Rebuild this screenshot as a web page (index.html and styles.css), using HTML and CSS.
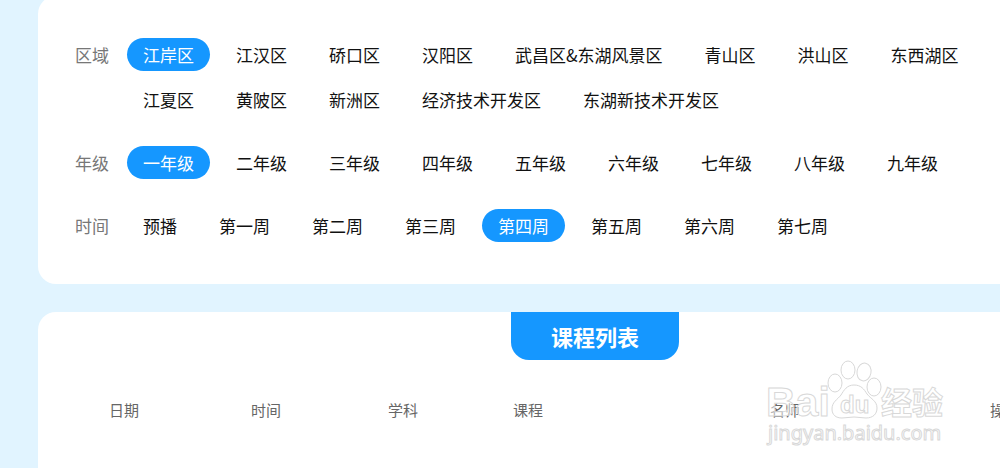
FILE: index.html
```html
<!DOCTYPE html>
<html lang="zh-CN">
<head>
<meta charset="utf-8">
<title>课程列表</title>
<link rel="stylesheet" href="styles.css">
</head>
<body>
    <main class="page">
        <section class="card filters">
            <div class="row" role="group" aria-labelledby="area">
                <span class="label" id="area">区域</span>
                <div class="options">
                    <button type="button" class="option active">江岸区</button>
                    <button type="button" class="option">江汉区</button>
                    <button type="button" class="option">硚口区</button>
                    <button type="button" class="option">汉阳区</button>
                    <button type="button" class="option">武昌区&amp;东湖风景区</button>
                    <button type="button" class="option">青山区</button>
                    <button type="button" class="option">洪山区</button>
                    <button type="button" class="option">东西湖区</button>
                    <button type="button" class="option">江夏区</button>
                    <button type="button" class="option">黄陂区</button>
                    <button type="button" class="option">新洲区</button>
                    <button type="button" class="option">经济技术开发区</button>
                    <button type="button" class="option">东湖新技术开发区</button>
                </div>
            </div>
            <div class="row" role="group" aria-labelledby="grade">
                <span class="label" id="grade">年级</span>
                <div class="options">
                    <button type="button" class="option active">一年级</button>
                    <button type="button" class="option">二年级</button>
                    <button type="button" class="option">三年级</button>
                    <button type="button" class="option">四年级</button>
                    <button type="button" class="option">五年级</button>
                    <button type="button" class="option">六年级</button>
                    <button type="button" class="option">七年级</button>
                    <button type="button" class="option">八年级</button>
                    <button type="button" class="option">九年级</button>
                </div>
            </div>
            <div class="row" role="group" aria-labelledby="week">
                <span class="label" id="week">时间</span>
                <div class="options">
                    <button type="button" class="option">预播</button>
                    <button type="button" class="option">第一周</button>
                    <button type="button" class="option">第二周</button>
                    <button type="button" class="option">第三周</button>
                    <button type="button" class="option active">第四周</button>
                    <button type="button" class="option">第五周</button>
                    <button type="button" class="option">第六周</button>
                    <button type="button" class="option">第七周</button>
                </div>
            </div>
        </section>

        <section class="card list">
            <h2 class="title">课程列表</h2>
            <table class="courses">
                <thead>
                    <tr>
                        <th class="date">日期</th>
                        <th class="time">时间</th>
                        <th class="subject">学科</th>
                        <th class="course">课程</th>
                        <th class="teacher">名师</th>
                        <th>操作</th>
                    </tr>
                </thead>
            </table>
        </section>
    </main>

    <svg class="watermark" width="190" height="96" viewBox="0 0 190 96">
        <g class="outline">
            <text class="bai" x="3" y="58">Bai</text>
            <ellipse cx="72" cy="25" rx="7" ry="9"/>
            <ellipse cx="85" cy="12" rx="7" ry="9"/>
            <ellipse cx="101" cy="14" rx="7" ry="9" transform="rotate(10 101 14)"/>
            <ellipse cx="111" cy="29" rx="7" ry="9"/>
            <path d="M91 27c-7 0-10 5-13 10-4 5-9 7-9 14 0 6 4 9 10 9 4 0 8-1 12-1s8 1 12 1c7 0 11-4 11-10 0-7-6-9-10-14-3-5-6-9-13-9z"/>
            <text class="du" x="77" y="55">du</text>
            <text class="jingyan" x="118" y="56">经验</text>
            <text class="site" x="5" y="82">jingyan.baidu.com</text>
        </g>
    </svg>
</body>
</html>
```
FILE: styles.css
```css
* {
    box-sizing: border-box;
    padding: 0;
    margin: 0;
}
html {
    height: 100%;
    overflow: hidden;
}
body {
    position: relative;
    height: 100%;
    overflow: hidden;
    background-color: #e1f4ff;
    font-family: "Noto Sans CJK SC", sans-serif;
    font-size: 17px;
    color: #111;
}
/* the cards run on past the right edge of the window */
.page {
    display: flex;
    flex-direction: column;
    gap: 28px;
    min-height: 110%;
    margin: -4px -152px 0 38px;
}
.card {
    background-color: white;
    border-radius: 18px;
}

.filters {
    display: flex;
    flex-direction: column;
    gap: 30px;
    padding: 42px 100px 42px 37px;
}
.row {
    display: flex;
    gap: 18px;
}
.label {
    flex: none;
    line-height: 33px;
    color: #777;
}
.options {
    display: flex;
    flex-wrap: wrap;
    gap: 12px 10px;
}
.option {
    height: 33px;
    padding: 0 16px;
    border: none;
    border-radius: 17px;
    background: none;
    font: inherit;
    line-height: 33px;
    color: inherit;
    white-space: nowrap;
    cursor: pointer;
}
.active {
    background-color: #1597ff;
    color: white;
}

.list {
    flex: 1 0 auto;
    padding: 0 43px 40px 71px;
}
/* centred on the card, whose side paddings differ by 28px */
.title {
    width: 168px;
    margin-bottom: 36px;
    margin-left: calc(50% - 98px);
    border-radius: 0 0 18px 18px;
    background-color: #1597ff;
    font-size: 22px;
    line-height: 48px;
    text-align: center;
    color: white;
}
.courses {
    width: 100%;
    table-layout: fixed;
    border-collapse: collapse;
    font-size: 15px;
}
.courses th {
    height: 26px;
    font-weight: normal;
    text-align: left;
    color: #666;
}
.date { width: 14.2%; }
.time { width: 13.7%; }
.subject { width: 12.5%; }
.course { width: 25.7%; }
.teacher { width: 22%; }

.watermark {
    position: absolute;
    right: 47px;
    bottom: 14px;
    pointer-events: none;
}
.outline {
    fill: rgba(255, 255, 255, 0.5);
    stroke: #d8d8d8;
    stroke-width: 1;
}
.bai {
    font: bold 41px "Liberation Sans", sans-serif;
}
.du {
    font: bold 24px "Liberation Sans", sans-serif;
}
.jingyan {
    font: bold 31px "Noto Sans CJK SC", sans-serif;
}
.site {
    font: 20px "Noto Sans", sans-serif;
}
```
